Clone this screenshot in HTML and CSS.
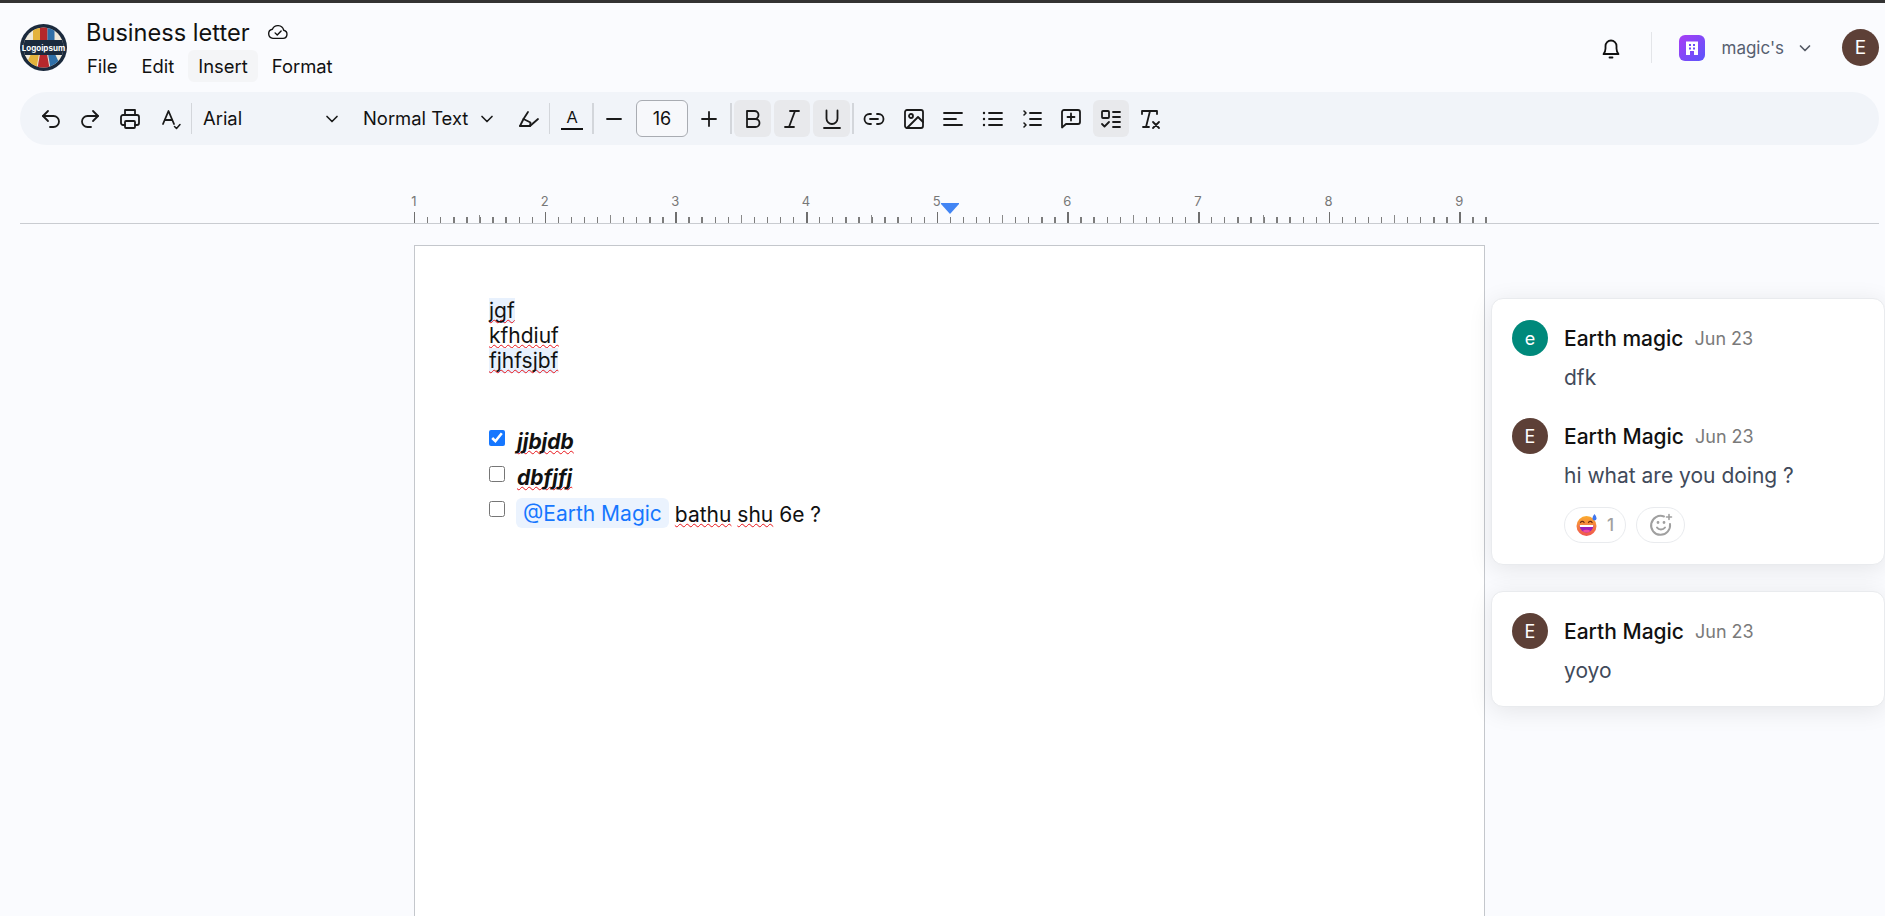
FILE: index.html
```html
<!DOCTYPE html>
<html>

	<head>
		<meta charset="UTF-8">
		<title>Business letter</title>
		<link rel="stylesheet" href="styles.css">
	</head>

	<body>
		<header class="topbar">
			<svg class="logo" viewBox="0 0 47 47">
				<defs>
					<clipPath id="logoclip"><circle cx="23.5" cy="23.5" r="20"/></clipPath>
					<linearGradient id="emojiface" x1="0" y1="0" x2="0" y2="1">
						<stop offset="0" stop-color="#fbac2e"/>
						<stop offset="1" stop-color="#ef5350"/>
					</linearGradient>
				</defs>
				<circle cx="23.5" cy="23.5" r="23.5" fill="#1b2a3d"/>
				<g clip-path="url(#logoclip)">
					<rect x="0" y="0" width="47" height="47" fill="#efe9da"/>
					<rect x="13" y="0" width="7" height="18" fill="#e3b23c"/>
					<rect x="20" y="0" width="7.5" height="18" fill="#b5282c"/>
					<rect x="27.5" y="0" width="7" height="18" fill="#2f6fa8"/>
					<path d="M3 47 L11 30 H19 L16 47Z" fill="#e3b23c"/>
					<path d="M17 47 L20 30 H27 L30 47Z" fill="#b5282c"/>
					<path d="M31 47 L28 30 H35 L43 47Z" fill="#2f6fa8"/>
					<rect x="0" y="16" width="47" height="15" fill="#1b2a3d"/>
				</g>
				<text class="logo-text" x="23.5" y="26.500" text-anchor="middle">Logoipsum</text>
			</svg>
			<div class="docinfo">
				<div class="titlerow">
					<span class="doctitle">Business letter</span>
					<svg class="cloud" viewBox="0 0 24 18" fill="none" stroke="#111" stroke-width="1.5" stroke-linecap="round" stroke-linejoin="round">
						<path d="M6.5 16.5a5 5 0 0 1-.6-9.9 6.5 6.5 0 0 1 12.3 1 4.5 4.5 0 0 1-.7 8.9z"/>
						<path d="M8.8 10.5l2.4 2.4 4.2-4.4"/>
					</svg>
				</div>
				<nav class="menu">
					<span class="menu-item">File</span>
					<span class="menu-item">Edit</span>
					<span class="menu-item active">Insert</span>
					<span class="menu-item">Format</span>
				</nav>
			</div>
			<div class="account">
				<svg class="bell" viewBox="0 0 24 24" fill="none" stroke="#111" stroke-width="1.8" stroke-linecap="round" stroke-linejoin="round">
					<path d="M4.5 18h15c-1.3-1.4-2-2.6-2-5.5V10a5.5 5.5 0 0 0-11 0v2.500c0 2.900-.7 4.100-2 5.500z"/>
					<path d="M10.500 21.500h3"/>
				</svg>
				<span class="account-sep"></span>
				<svg class="org" viewBox="0 0 26 26">
					<defs>
						<linearGradient id="orggrad" x1="0" y1="0" x2="1" y2="1">
							<stop offset="0" stop-color="#a93df5"/>
							<stop offset="1" stop-color="#5a55fb"/>
						</linearGradient>
					</defs>
					<rect width="26" height="26" rx="6" fill="url(#orggrad)"/>
					<path d="M7 6.500h12V20h-4v-4h-4v4H7z" fill="#fff"/>
					<path d="M10 9h2v2h-2zM14 9h2v2h-2zM10 12.500h2v2h-2zM14 12.500h2v2h-2z" fill="#6a4cf8"/>
				</svg>
				<span class="org-name">magic's</span>
				<svg class="org-chev" viewBox="0 0 16 16" fill="none" stroke="#555b66" stroke-width="1.7" stroke-linecap="round" stroke-linejoin="round">
					<path d="M3.500 6l4.500 4.500L12.500 6"/>
				</svg>
				<span class="avatar brown big">E</span>
			</div>
		</header>

		<div class="toolbar">
			<button class="btn"><svg viewBox="0 0 24 24"><path d="M9 14 4 9l5-5"/><path d="M4 9h10.500a5.500 5.500 0 0 1 0 11H11"/></svg></button>
			<button class="btn"><svg viewBox="0 0 24 24"><path d="M15 14l5-5-5-5"/><path d="M20 9H9.500a5.500 5.500 0 0 0 0 11H13"/></svg></button>
			<button class="btn ml1"><svg viewBox="0 0 24 24"><path d="M7 8V3h10v5"/><path d="M7 18H5a2 2 0 0 1-2-2v-6a2 2 0 0 1 2-2h14a2 2 0 0 1 2 2v6a2 2 0 0 1-2 2h-2"/><rect x="7" y="14" width="10" height="7" rx="1"/></svg></button>
			<button class="btn ml2"><svg viewBox="0 0 24 24"><path d="M4 17 9.500 4l5.500 13"/><path d="M6 13h7"/><path d="M15.500 19.500l2 2 3.500-4" stroke-width="1.500"/></svg></button>
			<span class="sep thin"></span>
			<div class="select font-select"><span>Arial</span><svg viewBox="0 0 24 24"><path d="M6 9l6 6 6-6"/></svg></div>
			<div class="select style-select"><span>Normal Text</span><svg viewBox="0 0 24 24"><path d="M6 9l6 6 6-6"/></svg></div>
			<button class="btn ml8"><svg viewBox="0 0 24 24"><path d="M3 19l3.500-7 4.500-7"/><path d="M3 19h10l8-7"/><path d="M6.500 12l7 3.500-.5 3.500"/></svg></button>
			<span class="sep thin"></span>
			<button class="btn ml2 color-btn"><span class="color-a">A</span></button>
			<span class="sep"></span>
			<button class="btn"><svg viewBox="0 0 24 24"><path d="M5 12h14"/></svg></button>
			<div class="size-input">16</div>
			<button class="btn mr1"><svg viewBox="0 0 24 24"><path d="M12 5v14M5 12h14"/></svg></button>
			<span class="sep"></span>
			<button class="btn wide on"><svg viewBox="0 0 24 24"><path d="M6 4h7.500a4 4 0 0 1 0 8H6zM6 12h8.500a4 4 0 0 1 0 8H6z"/></svg></button>
			<button class="btn on"><svg viewBox="0 0 24 24"><path d="M10 4h9M5 20h9M15 4 9 20"/></svg></button>
			<button class="btn wide on"><svg viewBox="0 0 24 24"><path d="M6.500 3.500v8a5.500 5.500 0 0 0 11 0v-8"/><path d="M4 21h16"/></svg></button>
			<span class="sep"></span>
			<button class="btn"><svg viewBox="0 0 24 24"><path d="M9 7H7.500a5 5 0 0 0 0 10H9"/><path d="M15 7h1.500a5 5 0 0 1 0 10H15"/><path d="M8 12h8"/></svg></button>
			<button class="btn ml1"><svg viewBox="0 0 24 24"><rect x="3" y="3" width="18" height="18" rx="2"/><circle cx="9" cy="9" r="2"/><path d="M21 15l-5-5L5 21"/></svg></button>
			<button class="btn"><svg viewBox="0 0 24 24"><path d="M3 6h18M3 12h12M3 18h18"/></svg></button>
			<button class="btn ml1"><svg viewBox="0 0 24 24"><path d="M8 6h13M8 12h13M8 18h13"/><path d="M3 6h.01M3 12h.01M3 18h.01" stroke-width="2.400"/></svg></button>
			<button class="btn"><svg viewBox="0 0 24 24"><path d="M10 6h11M10 12h11M10 18h11"/><path d="M4 4l2 2-2 2M4 16l2 2-2 2" stroke-width="1.600"/></svg></button>
			<button class="btn"><svg viewBox="0 0 24 24"><path d="M3 20.500V5a2 2 0 0 1 2-2h14a2 2 0 0 1 2 2v10a2 2 0 0 1-2 2H7z"/><path d="M12 6.500v7M8.500 10h7"/></svg></button>
			<button class="btn on ml1"><svg viewBox="0 0 24 24"><rect x="3" y="4" width="7" height="7" rx="1"/><path d="M14 5h7M14 10h7M14 15h7M14 20h7"/><path d="M3 17l2.500 2.500L10 15"/></svg></button>
			<button class="btn"><svg viewBox="0 0 24 24"><path d="M4 7V4h15v3"/><path d="M12 4 8 20"/><path d="M5 20h6"/><path d="M15 15l6 6M21 15l-6 6"/></svg></button>
		</div>

		<div class="rulerbar">
			<div class="ruler">
				<div class="ruler-nums">
					<span>1</span><span>2</span><span>3</span><span>4</span><span>5</span><span>6</span><span>7</span><span>8</span><span>9</span>
				</div>
				<div class="ruler-ticks"></div>
				<span class="indent-mark"></span>
			</div>
		</div>

		<main class="workspace">
			<section class="page">
				<p class="line"><span class="hl spell">jgf</span></p>
				<p class="line"><span class="spell">kfhdiuf</span></p>
				<p class="line"><span class="hl spell">fjhfsjbf</span></p>
				<ul class="tasks">
					<li class="task"><input type="checkbox" checked><em class="spell">jjbjdb</em></li>
					<li class="task"><input type="checkbox"><em class="spell">dbfjfj</em></li>
					<li class="task"><input type="checkbox"><span class="mention">@Earth Magic</span><span class="tail"><span class="spell">bathu</span> <span class="spell">shu</span> 6e ?</span></li>
				</ul>
			</section>

			<aside class="comments">
				<div class="card">
					<div class="comment">
						<div class="who"><span class="avatar green">e</span><b>Earth magic</b><time>Jun 23</time></div>
						<p class="msg">dfk</p>
					</div>
					<div class="comment next">
						<div class="who"><span class="avatar brown">E</span><b>Earth Magic</b><time>Jun 23</time></div>
						<p class="msg">hi what are you doing ?</p>
						<div class="reactions">
							<span class="pill count">
								<svg viewBox="0 0 22 22">
									<circle cx="10.500" cy="12" r="10" fill="url(#emojiface)"/>
									<path d="M3.500 11h14a7 7.500 0 0 1-14 0z" fill="#9c1fb8"/>
									<path d="M3.700 11h13.600l-.3 2H4z" fill="#fff"/>
									<path d="M6.500 17a5 3 0 0 1 8 0 6.500 6.500 0 0 1-8 0z" fill="#f04d9b"/>
									<path d="M4.500 8.500c.8-1.500 2.800-1.500 3.600 0M12.500 8.500c.8-1.500 2.800-1.500 3.600 0" fill="none" stroke="#6b2a12" stroke-width="1.200" stroke-linecap="round"/>
									<path d="M18.500 0c1.300 1.800 2 3 2 4.500a2 2 0 0 1-4 0c0-1.500.7-2.700 2-4.500z" fill="#3f76ee"/>
								</svg>
								<span>1</span>
							</span>
							<span class="pill add">
								<svg viewBox="0 0 24 24" fill="none" stroke="#a0a0a0" stroke-width="2" stroke-linecap="round">
									<path d="M15 3.500A9.500 9.500 0 1 0 21 11"/>
									<path d="M8 14.500c1.800 2.700 6 2.700 8 0"/>
									<path d="M9 9.500h.01M15 9.500h.01" stroke-width="2.800"/>
									<path d="M20 1.500v5M17.500 4h5" stroke-width="1.600"/>
								</svg>
							</span>
						</div>
					</div>
				</div>
				<div class="card">
					<div class="comment">
						<div class="who"><span class="avatar brown">E</span><b>Earth Magic</b><time>Jun 23</time></div>
						<p class="msg">yoyo</p>
					</div>
				</div>
			</aside>
		</main>
	</body>

</html>
```

FILE: styles.css
```css
* {
	margin: 0;
	padding: 0;
	box-sizing: border-box;
	list-style: none;
}

html,
body {
	height: 916px;
	overflow: hidden;
}

body {
	background: #fafbfe;
	font-family: Inter, "Liberation Sans", sans-serif;
	color: #111;
}

/* top bar */
.topbar {
	display: flex;
	align-items: center;
	height: 92px;
	padding: 0 6px 0 20px;
	border-top: 3px solid #333;
}

.logo {
	width: 47px;
	height: 47px;
	margin-right: 19px;
}

.logo-text {
	font: 700 8px Inter, sans-serif;
	fill: #fff;
}

.docinfo {
	display: flex;
	flex-direction: column;
	align-self: flex-start;
	padding-top: 13px;
}

.titlerow {
	display: flex;
	align-items: center;
	height: 32px;
}

.doctitle {
	font-size: 23.600px;
}

.cloud {
	width: 22px;
	height: 17px;
	margin: -1px 0 0 17px;
}

.menu {
	display: flex;
	gap: 4px;
	margin: 2px 0 0 -9px;
}

.menu-item {
	height: 32px;
	padding: 0 10px;
	border-radius: 6px;
	font-size: 18.400px;
	line-height: 33px;
}

.menu-item.active {
	background: #f4f5f7;
}

.account {
	display: flex;
	align-items: center;
	margin-left: auto;
}

.bell {
	width: 24px;
	height: 24px;
}

.account-sep {
	width: 1px;
	height: 31px;
	margin-left: 28px;
	background: #e3e5e9;
}

.org {
	width: 26px;
	height: 26px;
	margin-left: 27px;
}

.org-name {
	margin-left: 16px;
	font-size: 17px;
	color: #566070;
}

.org-chev {
	width: 16px;
	height: 16px;
	margin-left: 13px;
}

.avatar {
	display: flex;
	align-items: center;
	justify-content: center;
	flex: none;
	width: 36px;
	height: 36px;
	border-radius: 50%;
	font-size: 18px;
	color: #fff;
}

.avatar.big {
	width: 37px;
	height: 37px;
	margin-left: 29px;
	font-size: 19px;
}

.brown {
	background: #5d4037;
}

.green {
	background: #00897b;
}

/* toolbar */
.toolbar {
	display: flex;
	align-items: center;
	gap: 3px;
	height: 53px;
	margin: 0 6px 0 20px;
	padding-left: 13px;
	border-radius: 27px;
	background: #f1f4f9;
}

.btn {
	display: flex;
	align-items: center;
	justify-content: center;
	flex: none;
	width: 36px;
	height: 37px;
	border: 0;
	border-radius: 6px;
	background: transparent;
	color: #111;
}

.btn svg {
	width: 24px;
	height: 24px;
	fill: none;
	stroke: #1a1a1a;
	stroke-width: 1.800;
	stroke-linecap: round;
	stroke-linejoin: round;
}

.btn.on {
	background: #e8e9ec;
}

.btn.wide {
	width: 37px;
}

.ml1 {
	margin-left: 1px;
}

.ml2 {
	margin-left: 2px;
}

.ml8 {
	margin-left: 8px;
}

.mr1 {
	margin-right: 1px;
}

.sep {
	flex: none;
	width: 2px;
	height: 31px;
	margin: 0 -1px;
	background: #d3d6db;
}

.sep.thin {
	width: 1px;
}

.select {
	display: flex;
	align-items: center;
	justify-content: space-between;
	flex: none;
	height: 37px;
	padding: 0 3px 0 9px;
	font-size: 18.400px;
}

.select span {
	margin-top: -1px;
}

.select svg {
	width: 20px;
	height: 20px;
	fill: none;
	stroke: #1a1a1a;
	stroke-width: 2;
	stroke-linecap: round;
	stroke-linejoin: round;
}

.font-select {
	width: 151px;
}

.style-select {
	width: 146px;
	margin-left: 6px;
}

.color-a {
	width: 22px;
	border-bottom: 2px solid #111;
	font-size: 16px;
	line-height: 21px;
	text-align: center;
}

.size-input {
	flex: none;
	width: 52px;
	height: 37px;
	margin-left: 1px;
	border: 1px solid #a9acb2;
	border-radius: 6px;
	background: #f7f8fb;
	font-size: 18px;
	line-height: 35px;
	text-align: center;
}

/* ruler */
.rulerbar {
	height: 79px;
	margin: 0 6px 0 20px;
	padding: 48px 0 0 394px;
	border-bottom: 1px solid #c9ccd1;
}

.ruler {
	position: relative;
	width: 1073px;
	height: 30px;
}

.ruler-nums {
	display: flex;
	margin-left: -65.330px;
	font-size: 13px;
	line-height: 16px;
	color: #777;
}

.ruler-nums span {
	flex: none;
	width: 130.670px;
	text-align: center;
}

.ruler-ticks {
	height: 14px;
	background:
		repeating-linear-gradient(to right, #6f6f6f 0 1.500px, transparent 1.500px 130.670px) left bottom / 100% 11px no-repeat,
		repeating-linear-gradient(to right, #8a8a8a 0 1px, transparent 1px 65.335px) left bottom / 100% 8px no-repeat,
		repeating-linear-gradient(to right, #7c7c7c 0 1.300px, transparent 1.300px 13.067px) left bottom / 100% 6px no-repeat;
}

.indent-mark {
	position: absolute;
	left: 527px;
	top: 10px;
	width: 18px;
	height: 11px;
	background: #4285f4;
	clip-path: polygon(0 0, 100% 0, 100% 10%, 50% 100%, 0 10%);
}

/* page */
.workspace {
	display: flex;
	align-items: flex-start;
	padding: 21px 0 0 414px;
}

.page {
	flex: none;
	width: 1071px;
	height: 1100px;
	padding: 52px 74px 0;
	border: 1px solid #c4c7cc;
	background: #fff;
	font-size: 21px;
	line-height: 25px;
	color: #111;
}

.line {
	height: 25px;
}

.hl {
	display: inline-block;
	background: #e8f1fd;
}

.spell {
	text-decoration: underline wavy #e8141a 1.400px;
	text-underline-offset: 1px;
	text-decoration-skip-ink: none;
}

.tasks {
	margin-top: 57px;
}

.task {
	display: flex;
	align-items: flex-start;
	height: 35px;
}

.task:first-child {
	height: 36px;
}

.task input {
	flex: none;
	width: 16px;
	height: 16px;
	margin: 0 12px 0 0;
	accent-color: #1677ff;
}

.task em {
	font-weight: 700;
	margin-top: -1px;
}

.mention {
	height: 30px;
	margin: -3px 0 0 -1px;
	padding: 0 7px;
	border-radius: 6px;
	background: #ebf3fe;
	color: #1677ff;
	line-height: 32px;
}

.tail {
	margin-left: 6px;
	line-height: 27px;
}

/* comments */
.comments {
	display: flex;
	flex-direction: column;
	gap: 26px;
	flex: none;
	width: 394px;
	margin: 53px 0 0 6px;
}

.card {
	padding: 21px 20px 21px;
	border: 1px solid #e9ebee;
	border-radius: 12px;
	background: #fff;
	box-shadow: 0 4px 24px rgba(0, 0, 0, .09);
}

.comment.next {
	margin-top: 26px;
}

.who {
	display: flex;
	align-items: center;
	height: 36px;
}

.who b {
	margin-left: 16px;
	font-size: 21px;
	font-weight: 500;
	color: #111;
}

.who time {
	margin-left: 11px;
	font-size: 18px;
	color: #7a7a7a;
}

.msg {
	margin: 8px 0 0 52px;
	font-size: 21px;
	line-height: 28px;
	color: #414a5a;
}

.reactions {
	display: flex;
	gap: 10px;
	margin: 17px 0 0 52px;
}

.pill {
	display: flex;
	align-items: center;
	justify-content: center;
	height: 36px;
	border: 1px solid #e9ebee;
	border-radius: 18px;
	color: #a0a0a0;
	font-size: 17px;
	font-weight: 500;
}

.pill.count {
	gap: 9px;
	width: 62px;
}

.pill.count svg {
	width: 22px;
	height: 22px;
}

.pill.add {
	width: 49px;
}

.pill.add svg {
	width: 24px;
	height: 24px;
}
```
